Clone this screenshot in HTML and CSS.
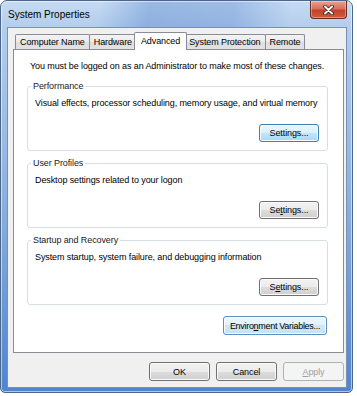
FILE: index.html
```html
<!DOCTYPE html>
<html>
<head>
    <meta charset="utf-8">
    <meta name="viewport" content="width=device-width, initial-scale=1.0">
    <title>System Properties</title>
    <link rel="stylesheet" href="styles.css">
</head>
<body>
    <div class="window">
        <div class="titlebar">
            <span class="title">System Properties</span>
            <button class="close-btn" title="Close">
                <svg width="11" height="10" viewBox="0 0 11 10">
                    <path d="M2 1.5 L9 8.5 M9 1.5 L2 8.5" stroke="#3b1a14" stroke-width="3.6" stroke-linecap="round"/>
                    <path d="M2 1.5 L9 8.5 M9 1.5 L2 8.5" stroke="#ffffff" stroke-width="2" stroke-linecap="round"/>
                </svg>
            </button>
        </div>

        <div class="client">
            <div class="tabs">
                <span class="tab">Computer Name</span>
                <span class="tab">Hardware</span>
                <span class="tab selected">Advanced</span>
                <span class="tab">System Protection</span>
                <span class="tab">Remote</span>
            </div>

            <div class="panel">
                <p class="note">You must be logged on as an Administrator to make most of these changes.</p>

                <fieldset class="group">
                    <legend>Performance</legend>
                    <p>Visual effects, processor scheduling, memory usage, and virtual memory</p>
                    <div class="group-actions">
                        <button class="btn hot">Settings...</button>
                    </div>
                </fieldset>

                <fieldset class="group">
                    <legend>User Profiles</legend>
                    <p>Desktop settings related to your logon</p>
                    <div class="group-actions">
                        <button class="btn">Se<u>t</u>tings...</button>
                    </div>
                </fieldset>

                <fieldset class="group">
                    <legend>Startup and Recovery</legend>
                    <p>System startup, system failure, and debugging information</p>
                    <div class="group-actions">
                        <button class="btn">S<u>e</u>ttings...</button>
                    </div>
                </fieldset>

                <div class="panel-actions">
                    <button class="btn glow">Enviro<u>n</u>ment Variables...</button>
                </div>
            </div>

            <div class="dialog-actions">
                <button class="btn wide">OK</button>
                <button class="btn wide">Cancel</button>
                <button class="btn wide" disabled><u>A</u>pply</button>
            </div>
        </div>
    </div>
</body>
</html>
```

FILE: styles.css
```css
body {
    margin: 0;
    background: #ffffff;
    font-family: "Liberation Sans", Arial, sans-serif;
    font-size: 9px;
    letter-spacing: -0.1px;
    color: #000000;
}

.window {
    width: 353px;
    height: 393px;
    box-sizing: border-box;
    border: 1px solid #4a6688;
    border-radius: 7px 7px 5px 5px;
    display: flex;
    flex-direction: column;
    background:
        linear-gradient(100deg, rgba(255,255,255,0) 28%, rgba(70,120,200,0.35) 42%, rgba(70,120,200,0.3) 66%, rgba(255,255,255,0) 82%) top / 100% 27px no-repeat,
        linear-gradient(180deg, #c6dbf2 0, #b3cdec 27px, #8db1de 50%, #4f84cf 100%);
    box-shadow: inset 0 0 0 1px rgba(255,255,255,0.55);
}

/* Title bar */
.titlebar {
    height: 26px;
    display: flex;
    align-items: center;
    padding-left: 7px;
    padding-right: 5px;
}
.title {
    font-size: 10px;
    letter-spacing: 0;
    color: #000000;
}
.close-btn {
    margin-left: auto;
    align-self: flex-start;
    width: 37px;
    height: 18px;
    padding: 0;
    border: 1px solid #6b2b22;
    border-top: none;
    border-radius: 0 0 4px 4px;
    background: linear-gradient(180deg, #e8a393 0, #d7705c 45%, #c4412b 55%, #d25a3c 100%);
    box-shadow: inset 0 0 0 1px rgba(255,255,255,0.35);
    display: flex;
    align-items: center;
    justify-content: center;
}

/* Client area */
.client {
    flex: 1;
    margin: 0 5px 4px 6px;
    border: 1px solid #7890b4;
    background: #f0f0f0;
    display: flex;
    flex-direction: column;
    padding: 4px 2px 6px 5px;
}

.tabs {
    display: flex;
    align-items: flex-end;
    padding-left: 2px;
    margin-bottom: -1px;
    position: relative;
    z-index: 1;
}
.tab {
    height: 15px;
    line-height: 15px;
    padding: 0 4px;
    margin-right: -1px;
    margin-bottom: 1px;
    border: 1px solid #898c95;
    border-bottom: none;
    border-radius: 2px 2px 0 0;
    background: linear-gradient(180deg, #f3f3f3 0, #ebebeb 50%, #dedede 50%, #e2e2e2 100%);
    box-sizing: border-box;
    white-space: nowrap;
}
.tab.selected {
    height: 18px;
    line-height: 16px;
    margin: 0 -3px 0 -2px;
    padding: 0 6px;
    background: #ffffff;
    position: relative;
    z-index: 2;
}

.panel {
    flex: 1;
    background: #ffffff;
    border: 1px solid #898c95;
    padding: 10px 15px 0 13px;
    display: flex;
    flex-direction: column;
}
.panel p { margin: 0; line-height: 13px; }
.note { margin-left: 3px !important; }

.group {
    margin: 7px 0 0;
    padding: 0 8px 8px 7px;
    border: 1px solid #d5dfe5;
    border-radius: 3px;
    min-width: 0;
}
.group + .group { margin-top: 6px; }
.group legend {
    margin-left: -4px;
    padding: 0 2px;
    line-height: 13px;
    color: #1a1a1a;
}
.group p { margin-top: 4px; }
.group-actions {
    display: flex;
    justify-content: flex-end;
    margin-top: 14px;
}

.panel-actions {
    display: flex;
    justify-content: flex-end;
    margin-top: 11px;
    padding-right: 1px;
}

/* Buttons */
.btn {
    font-family: inherit;
    font-size: 9px;
    letter-spacing: -0.1px;
    color: #000000;
    height: 18px;
    min-width: 60px;
    padding: 0 6px;
    border: 1px solid #707070;
    border-radius: 3px;
    background: linear-gradient(180deg, #f2f2f2 0, #ebebeb 50%, #dddddd 50%, #cfcfcf 100%);
    box-shadow: inset 0 0 0 1px #fbfbfb;
    box-sizing: border-box;
    white-space: nowrap;
}
.btn.hot {
    border-color: #3c7fb1;
    background: linear-gradient(180deg, #eaf6fd 0, #d9f0fc 50%, #bee6fd 50%, #a7d9f5 100%);
}
.btn.glow {
    height: 19px;
    width: 104px;
    padding: 0 3px;
    letter-spacing: -0.3px;
    border-color: #5a8fbe;
    background: linear-gradient(180deg, #eef7fd 0, #e1f1fb 50%, #cfe8f9 50%, #c4e2f6 100%);
}
.btn.wide {
    width: 61px;
    height: 19px;
}
.btn:disabled {
    color: #a0a0a0;
    border-color: #adb2b5;
    background: #f4f4f4;
    box-shadow: none;
}

.dialog-actions {
    display: flex;
    justify-content: flex-end;
    gap: 6px;
    margin-top: 9px;
}
```
